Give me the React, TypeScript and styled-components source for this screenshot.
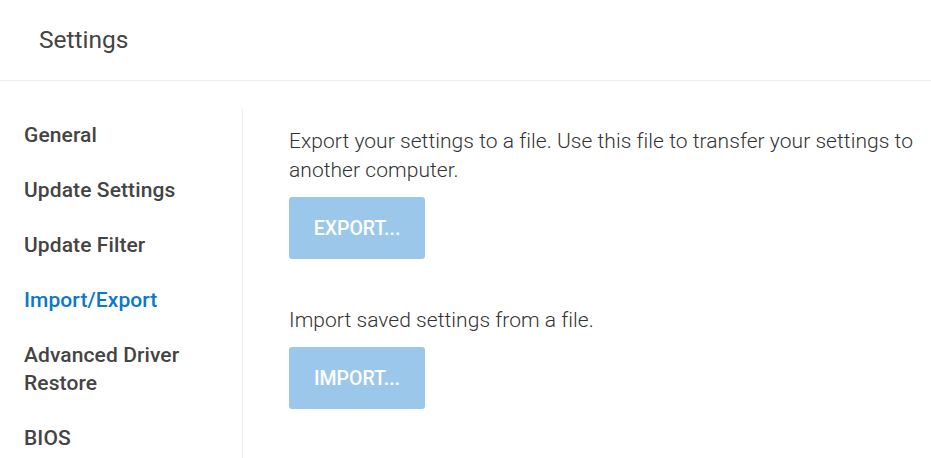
import styled, { createGlobalStyle } from "styled-components";

const GlobalStyle = createGlobalStyle`
  body {
    margin: 0;
    background: #fff;
    font-family: Roboto, "Liberation Sans", sans-serif;
  }
`;

const Page = styled.div`
  width: 931px;
  height: 458px;
  overflow: hidden;
`;

const Header = styled.header`
  height: 81px;
  border-bottom: 1px solid #ededed;
  display: flex;
  align-items: center;
  padding-left: 39px;
  box-sizing: border-box;

  h1 {
    margin: 0 0 1px;
    font-size: 24.5px;
    font-weight: 400;
    color: #444;
  }
`;

const Body = styled.div`
  display: flex;
  padding-top: 28px;
`;

const Sidebar = styled.nav`
  width: 243px;
  flex-shrink: 0;
  box-sizing: border-box;
  border-right: 1px solid #efefef;
  padding: 11.5px 0 0 24px;
  display: flex;
  flex-direction: column;
  gap: 27px;
  min-height: 360px;
`;

const NavItem = styled.a<{ active?: boolean }>`
  font-size: 21px;
  line-height: 28px;
  font-weight: 500;
  letter-spacing: 0.1px;
  color: ${({ active }) => (active ? "#0a78cc" : "#444")};
  text-decoration: none;
  max-width: 180px;
`;

const Main = styled.main`
  flex: 1;
  padding: 18px 14px 0 46px;
`;

const Section = styled.section`
  margin-bottom: 47px;
`;

const Description = styled.p`
  margin: 0 0 12px;
  font-size: 21px;
  line-height: 29px;
  font-weight: 300;
  letter-spacing: 0.05px;
  color: #333;
`;

const ActionButton = styled.button`
  width: 136px;
  height: 62px;
  border: none;
  border-radius: 3px;
  background: #9bc8ea;
  color: #fff;
  font-family: Roboto, "Liberation Sans", sans-serif;
  font-size: 19.5px;
  font-weight: 500;
  cursor: default;
`;

const navItems = [
  "General",
  "Update Settings",
  "Update Filter",
  "Import/Export",
  "Advanced Driver Restore",
  "BIOS",
];

export default function App() {
  return (
    <Page>
      <GlobalStyle />
      <Header>
        <h1>Settings</h1>
      </Header>
      <Body>
        <Sidebar>
          {navItems.map((item) => (
            <NavItem key={item} active={item === "Import/Export"}>
              {item}
            </NavItem>
          ))}
        </Sidebar>
        <Main>
          <Section>
            <Description>
              Export your settings to a file. Use this file to transfer your
              settings to another computer.
            </Description>
            <ActionButton disabled>EXPORT...</ActionButton>
          </Section>
          <Section>
            <Description>Import saved settings from a file.</Description>
            <ActionButton disabled>IMPORT...</ActionButton>
          </Section>
        </Main>
      </Body>
    </Page>
  );
}
